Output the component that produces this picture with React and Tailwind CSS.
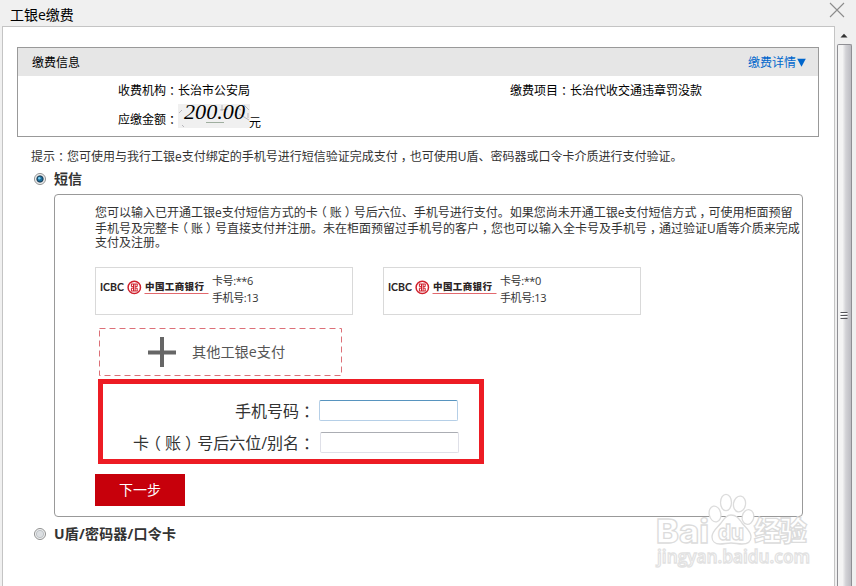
import React from 'react';

const cards = [
  { id: 'a', number: '**6', phone: '13' },
  { id: 'b', number: '**0', phone: '13' },
];

const introLines = [
  '您可以输入已开通工银e支付短信方式的卡（账）号后六位、手机号进行支付。如果您尚未开通工银e支付短信方式，可使用柜面预留',
  '手机号及完整卡（账）号直接支付并注册。未在柜面预留过手机号的客户，您也可以输入全卡号及手机号，通过验证U盾等介质来完成',
  '支付及注册。',
];

// Full-width punctuation is centred in its cell
const Txt = ({ children }) =>
  children.split(/([：，（）])/).map((part, i) =>
    /^[：，（）]$/.test(part) ? (
      <span
        key={i}
        className="inline-block w-[1em] text-center font-['Noto_Sans_CJK_SC',sans-serif] [font-feature-settings:'halt']"
      >
        {part}
      </span>
    ) : (
      part
    )
  );

const Radio = ({ checked }) => (
  <svg width="12" height="12" viewBox="0 0 12 12" role="radio" aria-checked={!!checked}>
    <circle cx="6" cy="6" r="5.5" fill="#f6f6f6" stroke="#8e8f8f" />
    <circle cx="6" cy="6" r="3.7" fill="#dcdfe2" stroke="#b4b9be" strokeWidth="0.8" />
    {checked && (
      <>
        <circle cx="6" cy="6" r="3.1" fill="#1b6d9c" stroke="#14384f" strokeWidth="0.9" />
        <circle cx="5.3" cy="5.2" r="1.2" fill="#7fd0f2" />
      </>
    )}
  </svg>
);

const BankLogo = () => (
  <svg width="110" height="20" viewBox="0 0 110 20" className="shrink-0">
    <text
      x="0"
      y="14.4"
      fontSize="11.5"
      fontWeight="700"
      textLength="24"
      lengthAdjust="spacingAndGlyphs"
      fill="#2b2324"
      className="font-['Lato',sans-serif]"
    >
      ICBC
    </text>
    <circle cx="34.3" cy="10.4" r="6.2" fill="#fff" stroke="#d0202c" strokeWidth="1.5" />
    <path
      d="M31 7h6.6M31 14h6.6M31.4 7v2.6h2M37.2 7v2.6h-2M31.4 14v-2.8h2M37.2 14v-2.8h-2M33.5 7v7M35.1 7v7"
      fill="none"
      stroke="#d0202c"
      strokeWidth="1"
    />
    <text
      x="45"
      y="13.2"
      fontSize="9.5"
      fontWeight="900"
      textLength="59"
      fill="#2b2324"
      className="font-['Noto_Sans_CJK_SC',sans-serif]"
    >
      中国工商银行
    </text>
    <path d="M44.5 16.5h64" stroke="#e2686d" strokeWidth="1" />
  </svg>
);

const BankCard = ({ card }) => (
  <div className="flex h-12 w-[258px] border border-[#d9d9d9] pl-1">
    <div className="pt-[9px]">
      <BankLogo />
    </div>
    <div className="ml-[2px] pt-[4px] text-[11px] leading-[17px] tracking-[-0.4px] text-[#333]">
      <div>卡号:{card.number}</div>
      <div>手机号:{card.phone}</div>
    </div>
  </div>
);

const Amount = () => (
  <svg width="72" height="24" viewBox="0 0 72 24" className="overflow-visible bg-[#f0f0f0]">
    <path
      d="M44 1v6M42 6l8-1M58 3l5 3M66 1l5 5M61 10l10 6M1 9l3-3M4 21l2 2M70 9v5"
      fill="none"
      stroke="#a9a9b0"
      strokeWidth="0.8"
    />
    <path d="M28 18.5h18" stroke="#9fae9f" />
    <text
      x="6"
      y="15"
      fontSize="20"
      fontStyle="italic"
      textLength="61"
      lengthAdjust="spacingAndGlyphs"
      fill="#000"
      className="font-['Liberation_Serif',serif]"
    >
      200.00
    </text>
  </svg>
);

const PaymentInfo = () => (
  <section className="ml-[14px] h-[90px] w-[802px] border border-[#999] text-xs text-black">
    <div className="flex h-7 items-center justify-between bg-[#e6e6e6] pt-[2px] pr-[11px] pl-[14px]">
      <span>缴费信息</span>
      <a className="flex items-center text-[#0066cc]">
        缴费详情
        <svg width="11" height="10" viewBox="0 0 11 10">
          <path d="M1.2 0.8h8.6L5.5 8.8z" fill="#0066cc" />
        </svg>
      </a>
    </div>
    <div className="flex h-7 items-center pl-[100px]">
      <div className="w-[392px]">
        <Txt>收费机构：长治市公安局</Txt>
      </div>
      <div>
        <Txt>缴费项目：长治代收交通违章罚没款</Txt>
      </div>
    </div>
    <div className="flex items-start pl-[100px]">
      <div className="w-[60px] pt-[7px]">
        <Txt>应缴金额：</Txt>
      </div>
      <Amount />
      <span className="-ml-px pt-[11px]">元</span>
    </div>
  </section>
);

const Watermark = () => (
  <svg
    width="164"
    height="92"
    viewBox="0 0 164 92"
    className="pointer-events-none absolute top-[490px] left-[652px]"
  >
    <g fill="#fff" stroke="#dcdcdc" strokeWidth="1.3">
      <ellipse cx="74" cy="12.5" rx="5.5" ry="8.2" />
      <ellipse cx="87.5" cy="14" rx="6" ry="8" transform="rotate(10 87.5 14)" />
      <ellipse cx="63" cy="24" rx="5.8" ry="8" transform="rotate(-12 63 24)" />
      <ellipse cx="96" cy="27" rx="5.8" ry="7.4" transform="rotate(12 96 27)" />
      <path d="M79 25c6 0 8 4 11 8 4 5 9 8 9 14 0 5-4 7-9 7-4 0-7-1-11-1s-7 1-11 1c-5 0-8-3-8-7 0-6 5-9 9-14 3-4 5-8 10-8z" />
      <g className="font-['Inter',sans-serif]" fontWeight="800">
        <text x="4" y="53" fontSize="33" textLength="53" lengthAdjust="spacingAndGlyphs">
          Bai
        </text>
        <text x="66" y="50" fontSize="22" textLength="26" lengthAdjust="spacingAndGlyphs">
          du
        </text>
      </g>
      <text
        x="102"
        y="51"
        fontSize="27"
        fontWeight="900"
        textLength="53"
        className="font-['Noto_Sans_CJK_SC',sans-serif]"
      >
        经验
      </text>
      <text
        x="5"
        y="73"
        fontSize="18"
        fontWeight="600"
        textLength="153"
        lengthAdjust="spacingAndGlyphs"
        stroke="#e2e2e2"
        className="font-['Open_Sans',sans-serif]"
      >
        jingyan.baidu.com
      </text>
    </g>
  </svg>
);

const Scrollbar = () => (
  <div className="flex w-4 flex-col items-center bg-[#f0f0f0]">
    <div className="flex h-[18px] items-center">
      <svg width="8" height="5" viewBox="0 0 8 5">
        <path d="M0.5 4.5L4 0.8 7.5 4.5z" fill="#333" />
      </svg>
    </div>
    <div className="flex w-[15px] flex-1 flex-col items-center rounded-t-[2px] border-x border-t border-[#8f8f94] bg-linear-to-r from-[#f4f4f4] from-35% via-[#d2d2d6] via-60% to-[#bcbcc2] pt-[266px]">
      <svg width="8" height="8" viewBox="0 0 8 8" className="-ml-px">
        <path d="M0.5 1.5h7M0.5 4.5h7M0.5 7.5h7" stroke="#55555a" />
        <path d="M0.5 2.5h7M0.5 5.5h7" stroke="#fff" />
      </svg>
    </div>
  </div>
);

const App = () => {
  return (
    <div className="relative flex h-[586px] w-[856px] flex-col overflow-hidden bg-[#f0f0f0] font-['Open_Sans','Noto_Sans_CJK_SC',sans-serif] whitespace-nowrap text-[#333]">
      <header className="flex h-[26px] shrink-0 items-start justify-between pr-[11px] pl-[10px]">
        <h1 className="pt-[5px] text-sm leading-5 text-black">工银e缴费</h1>
        <svg width="16" height="16" viewBox="0 0 16 16" className="mt-[2px]">
          <path d="M1 1l14 14M15 1L1 15" stroke="#8c8c8c" strokeWidth="1.1" />
        </svg>
      </header>

      <div className="flex flex-1 pl-[2px]">
        <main className="w-[833px] border-x border-t border-[#c4c4c4] bg-white pt-5">
          <PaymentInfo />

          <p className="mt-[10px] ml-7 text-xs leading-[18px]">
            <Txt>
              提示：您可使用与我行工银e支付绑定的手机号进行短信验证完成支付，也可使用U盾、密码器或口令卡介质进行支付验证。
            </Txt>
          </p>

          <label className="mt-[3px] ml-[31px] flex h-5 items-center gap-2 text-sm font-bold">
            <Radio checked />
            短信
          </label>

          <section className="mt-[5px] ml-[51px] h-[323px] w-[749px] rounded-[4px] border border-[#999] pt-[9px] pl-10">
            <div className="text-xs leading-[15.5px]">
              {introLines.map((line) => (
                <p key={line} className="h-[15.5px]">
                  <Txt>{line}</Txt>
                </p>
              ))}
            </div>

            <div className="mt-[16.5px] flex gap-[30px]">
              {cards.map((card) => (
                <BankCard key={card.id} card={card} />
              ))}
            </div>

            <button className="relative mt-[13px] ml-1 flex h-12 w-[243px] items-center text-[#555]">
              <svg width="243" height="48" viewBox="0 0 243 48" className="absolute inset-0">
                <rect
                  x="0.5"
                  y="0.5"
                  width="242"
                  height="47"
                  fill="none"
                  stroke="#dc7078"
                  strokeDasharray="6 4"
                />
              </svg>
              <svg width="30" height="30" viewBox="0 0 30 30" className="ml-12">
                <path d="M15 0v30M1 15.5h28" stroke="#666" strokeWidth="4" />
              </svg>
              <span className="ml-[15px] text-[14.2px]">其他工银e支付</span>
            </button>

            <div className="mt-[3px] ml-[3px] h-[85px] w-[386px] border-5 border-[#ed1c24] pt-4 text-base">
              <div className="flex h-[21px] items-center">
                <label className="w-[212px] text-right">
                  <Txt>手机号码：</Txt>
                </label>
                <input className="ml-1 h-[21px] w-[139px] rounded-[2px] border border-[#b5cfe7] border-t-[#5794bf] bg-white" />
              </div>
              <div className="mt-[11px] flex h-[21px] items-center">
                <label className="w-[212px] text-right">
                  <Txt>卡（账）号后六位/别名：</Txt>
                </label>
                <input className="ml-[5px] h-[21px] w-[139px] rounded-[2px] border border-[#dfe0e8] border-t-[#abadb3] bg-white" />
              </div>
            </div>

            <button className="mt-[10px] h-8 w-[90px] bg-[#c7000b] text-sm text-white">
              下一步
            </button>
          </section>

          <label className="mt-[7px] ml-[31px] flex h-5 items-center gap-2 text-sm font-bold tracking-[0.2px]">
            <Radio />
            U盾/密码器/口令卡
          </label>
        </main>
        <div className="w-px" />
        <Scrollbar />
      </div>

      <Watermark />
    </div>
  );
};

export default App;
